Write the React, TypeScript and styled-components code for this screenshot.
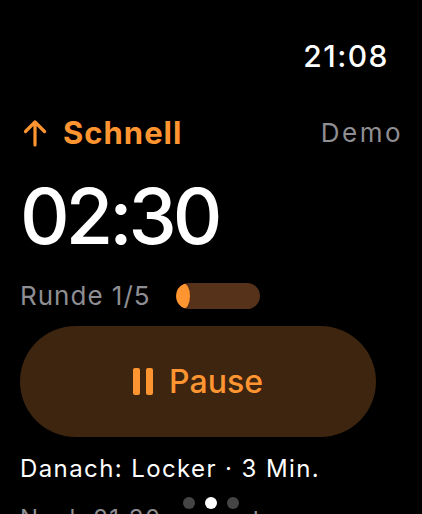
import React from "react";
import styled, { createGlobalStyle } from "styled-components";

const Global = createGlobalStyle`
  html, body { margin: 0; padding: 0; background: #000; }
  body { font-family: Inter, "Noto Sans", sans-serif; -webkit-font-smoothing: antialiased; }
`;

const Screen = styled.div`
  position: relative;
  width: 422px;
  height: 514px;
  overflow: hidden;
  background: #000;
  color: #fff;
  display: flex;
  flex-direction: column;
`;

const StatusBar = styled.div`
  display: flex;
  justify-content: flex-end;
  padding: 38px 33px 0 0;
`;

const Clock = styled.div`
  font-size: 30px;
  font-weight: 500;
  line-height: 36px;
  letter-spacing: 1.5px;
`;

const Content = styled.div`
  display: flex;
  flex-direction: column;
  padding: 0 46px 0 20px;
`;

const TitleRow = styled.div`
  display: flex;
  align-items: center;
  justify-content: space-between;
  margin-top: 40px;
  margin-right: -27px;
`;

const Title = styled.div`
  display: flex;
  align-items: center;
  gap: 16px;
  padding-left: 3px;
  color: #ff9530;
  font-size: 31px;
  font-weight: 700;
  line-height: 38px;
  letter-spacing: 1px;
`;

const Muted = styled.div<{ $track?: number }>`
  color: #8e8e93;
  font-size: 26px;
  font-weight: 400;
  line-height: 34px;
  letter-spacing: ${(p) => p.$track ?? 1}px;
`;

const Timer = styled.div`
  font-size: 77px;
  font-weight: 500;
  line-height: 90px;
  margin-top: 19px;
  letter-spacing: -4px;
`;

const RoundRow = styled.div`
  display: flex;
  align-items: center;
  gap: 25px;
  margin-top: 18px;
`;

const Track = styled.div`
  position: relative;
  width: 84px;
  height: 26px;
  border-radius: 13px;
  background: #56321a;
  overflow: hidden;
`;

const Fill = styled.div`
  height: 100%;
  border-radius: 50%;
  background: #ff9530;
`;

const PauseButton = styled.button`
  margin-top: 13px;
  height: 111px;
  border: none;
  border-radius: 56px;
  background: #3d2510;
  color: #ff9530;
  display: flex;
  align-items: center;
  justify-content: center;
  gap: 16px;
  font-family: inherit;
  font-size: 32px;
  font-weight: 500;
  padding: 0;
`;

const NextLine = styled.div`
  margin-top: 16px;
  font-size: 24px;
  line-height: 32px;
  color: #fff;
  letter-spacing: 1.4px;
`;

const EndLine = styled(NextLine)`
  color: #8e8e93;
  margin-top: 18px;
`;

const Dots = styled.div`
  position: absolute;
  left: 0;
  right: 0;
  bottom: 5px;
  display: flex;
  justify-content: center;
  gap: 10px;
`;

const Dot = styled.span<{ $active?: boolean }>`
  width: 12px;
  height: 12px;
  border-radius: 50%;
  background: ${(p) => (p.$active ? "#fff" : "#454545")};
`;

export default function App() {
  const progress = 1 / 6;
  return (
    <>
      <Global />
      <Screen>
        <StatusBar>
          <Clock>21:08</Clock>
        </StatusBar>
        <Content>
          <TitleRow>
            <Title>
              <svg width="24" height="28" viewBox="0 0 24 28" fill="none">
                <path
                  d="M12 26V3M2.5 12.5L12 3l9.5 9.5"
                  stroke="#ff9530"
                  strokeWidth="3.2"
                  strokeLinecap="round"
                  strokeLinejoin="round"
                />
              </svg>
              Schnell
            </Title>
            <Muted $track={2.5}>Demo</Muted>
          </TitleRow>
          <Timer>02:30</Timer>
          <RoundRow>
            <Muted>Runde 1/5</Muted>
            <Track>
              <Fill style={{ width: `${Math.round(progress * 84)}px` }} />
            </Track>
          </RoundRow>
          <PauseButton>
            <svg width="20" height="27" viewBox="0 0 20 27">
              <rect x="0" y="0" width="7" height="27" rx="2" fill="#ff9530" />
              <rect x="13" y="0" width="7" height="27" rx="2" fill="#ff9530" />
            </svg>
            Pause
          </PauseButton>
          <NextLine>Danach: Locker · 3 Min.</NextLine>
          <EndLine>Nach 21:30 gesamt</EndLine>
        </Content>
        <Dots>
          <Dot />
          <Dot $active />
          <Dot />
        </Dots>
      </Screen>
    </>
  );
}
